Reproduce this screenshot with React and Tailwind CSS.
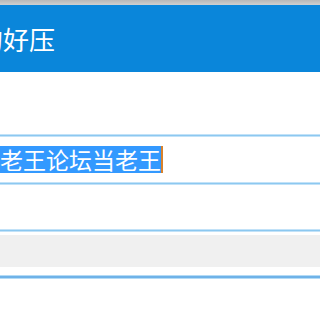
export default function App() {
  return (
    <div
      className="w-full min-w-[248px] h-[333px] bg-white overflow-hidden flex flex-col"
      style={{ fontFamily: '"Noto Sans CJK SC", "Noto Sans", sans-serif' }}
    >
      {/* window top edge */}
      <div className="h-[5px] bg-gradient-to-b from-[#b8b8b8] to-[#d0d0d0]" />

      {/* title bar */}
      <div className="h-[67px] bg-[#0a86da] flex items-center overflow-hidden">
        <span className="-ml-[23px] text-[26px] leading-none text-white whitespace-nowrap">
          的好压
        </span>
      </div>

      <div className="h-[62px]" />
      <div className="h-[3px] bg-[#8cc8f0] border-y border-[#c2e2f8]" />

      {/* input row */}
      <div className="h-[45px] flex items-center overflow-hidden">
        <div className="flex items-stretch h-[27px]">
          <span className="-ml-[4px] bg-[#3399ff] text-white text-[23px] leading-[27px] whitespace-nowrap pl-[4px]">
            老王论坛当老王
          </span>
          <span className="w-[2px] bg-[#d9822b]" />
        </div>
      </div>

      <div className="h-[3px] bg-[#8cc8f0] border-y border-[#c2e2f8]" />
      <div className="h-[44px]" />
      <div className="h-[3px] bg-[#8cc8f0] border-y border-[#c2e2f8]" />
      <div className="h-[3px]" />
      <div className="h-[32px] bg-[#f0f0f0]" />
      <div className="h-[8px]" />
      <div className="h-[4px] bg-[#6fb2e8] border-y border-[#b3dbf6]" />
      <div className="flex-1" />
    </div>
  );
}
